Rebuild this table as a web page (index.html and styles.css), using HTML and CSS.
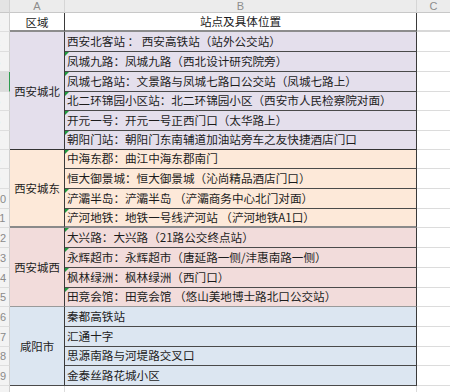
FILE: index.html
```html
<!DOCTYPE html>
<html lang="zh">
<head>
<meta charset="utf-8">
<link rel="stylesheet" href="styles.css">
</head>
<body>
<div class="sheet">
  <div class="corner"></div><div class="colh ch-a">A</div><div class="colh ch-b">B</div><div class="colh ch-c">C</div>

  <div class="rh"><span>1</span></div><div class="ca hdr">区域</div><div class="cb hdr center">站点及具体位置</div><div class="cc hdr-c"></div>

  <div class="rh sel"><span>2</span></div><div class="ca north span6 gb-dark">西安城北</div><div class="cb north">西安北客站 ： 西安高铁站（站外公交站）</div><div class="cc"></div>
  <div class="rh sel"><span>3</span></div><div class="cb north tri">凤城九路：凤城九路（西北设计研究院旁）</div><div class="cc"></div>
  <div class="rh sel act"><span>4</span></div><div class="cb north tri">凤城七路站：文景路与凤城七路口公交站（凤城七路上）</div><div class="cc"></div>
  <div class="rh sel"><span>5</span></div><div class="cb north tri">北二环锦园小区站：北二环锦园小区（西安市人民检察院对面）</div><div class="cc"></div>
  <div class="rh sel"><span>6</span></div><div class="cb north tri">开元一号：开元一号正西门口（太华路上）</div><div class="cc"></div>
  <div class="rh sel"><span>7</span></div><div class="cb north tri gb-dark">朝阳门站：朝阳门东南辅道加油站旁车之友快捷酒店门口</div><div class="cc"></div>

  <div class="rh sel"><span>8</span></div><div class="ca east span4 gb-gray">西安城东</div><div class="cb east tri">中海东郡：曲江中海东郡南门</div><div class="cc"></div>
  <div class="rh sel"><span>9</span></div><div class="cb east">恒大御景城：恒大御景城（沁尚精品酒店门口）</div><div class="cc"></div>
  <div class="rh"><span>10</span></div><div class="cb east tri">浐灞半岛：浐灞半岛 （浐灞商务中心北门对面）</div><div class="cc"></div>
  <div class="rh"><span>11</span></div><div class="cb east tri gb-gray">浐河地铁：地铁一号线浐河站 （浐河地铁A1口）</div><div class="cc"></div>

  <div class="rh"><span>12</span></div><div class="ca west span4 gb-light">西安城西</div><div class="cb west tri">大兴路：大兴路（21路公交终点站）</div><div class="cc"></div>
  <div class="rh"><span>13</span></div><div class="cb west tri">永辉超市：永辉超市（唐延路一侧/沣惠南路一侧）</div><div class="cc"></div>
  <div class="rh"><span>14</span></div><div class="cb west tri">枫林绿洲：枫林绿洲（西门口）</div><div class="cc"></div>
  <div class="rh"><span>15</span></div><div class="cb west tri gb-light">田竞会馆：田竞会馆 （悠山美地博士路北口公交站）</div><div class="cc"></div>

  <div class="rh"><span>16</span></div><div class="ca xy span4">咸阳市</div><div class="cb xy">秦都高铁站</div><div class="cc"></div>
  <div class="rh"><span>17</span></div><div class="cb xy">汇通十字</div><div class="cc"></div>
  <div class="rh"><span>18</span></div><div class="cb xy">思源南路与河堤路交叉口</div><div class="cc"></div>
  <div class="rh"><span>19</span></div><div class="cb xy">金泰丝路花城小区</div><div class="cc"></div>

  <div class="rh"><span>20</span></div><div class="ca blank"></div><div class="cb blank"></div><div class="cc"></div>
</div>
</body>
</html>
```

FILE: styles.css
```css
html, body {
  margin: 0;
  padding: 0;
  background: #ffffff;
  overflow: hidden;
}

.sheet {
  display: grid;
  width: 450px;
  grid-template-columns: 10px 55px 352px 33px;
  grid-template-rows: 13px 19px 20px 20px 20px 19px 20px 19px 19px 20px 20px 19px 20px 20px 20px 19px 20px 20px 19px 20px 20px;
  font-family: "Noto Sans CJK SC", "Noto Sans", sans-serif;
  color: #1c1c1c;
}

.sheet > div {
  box-sizing: border-box;
  min-width: 0;
}

/* column headers */
.corner {
  grid-column: 1;
  background: #e4e4e4;
  border-right: 1px solid #d2d2d2;
  border-bottom: 1px solid #c8c8c8;
}

.colh {
  display: flex;
  align-items: center;
  justify-content: center;
  background: #ececec;
  border-right: 1px solid #d6d6d6;
  border-bottom: 1px solid #c8c8c8;
  font-family: "Liberation Sans", "Noto Sans", sans-serif;
  font-size: 11px;
  color: #8c8c8c;
}

.ch-a { grid-column: 2; }
.ch-b { grid-column: 3; }
.ch-c { grid-column: 4; border-right: none; }

/* row headers */
.rh {
  grid-column: 1;
  display: flex;
  justify-content: flex-end;
  align-items: center;
  overflow: hidden;
  background: #f3f3f3;
  border-right: 1px solid #d0d0d0;
  border-bottom: 1px solid #dedede;
  font-family: "Liberation Sans", "Noto Sans", sans-serif;
  font-size: 11px;
  color: #8a8a8a;
}

.rh span {
  flex: none;
  width: 16px;
  text-align: left;
  margin-right: -1px;
}

.rh.sel { color: #7fb3d6; }

.rh.act {
  background: #dcdcdc;
  border-right: 1px solid #2e9b4e;
}

/* column A */
.ca {
  grid-column: 2;
  display: flex;
  align-items: center;
  justify-content: center;
  font-size: 11.4px;
  border-right: 1px solid #3a3a3a;
  border-bottom: 1px solid #4a4a4a;
  white-space: nowrap;
}

.span6 { grid-row: span 6; }
.span4 { grid-row: span 4; }

/* column B */
.cb {
  grid-column: 3;
  position: relative;
  display: flex;
  align-items: center;
  padding-left: 2px;
  font-size: 11.6px;
  line-height: 1;
  white-space: nowrap;
  overflow: hidden;
  border-right: 1px solid #3a3a3a;
  border-bottom: 1px solid #4a4a4a;
}

.center { justify-content: center; padding-left: 0; }

.hdr {
  background: #ffffff;
  border-bottom: 2px solid #8c8c8c;
}

.cb.tri::before {
  content: "";
  position: absolute;
  top: 0;
  left: 0;
  border-top: 4px solid #1f9a3e;
  border-right: 4px solid transparent;
}

/* column C */
.cc {
  grid-column: 4;
  background: #ffffff;
  border-bottom: 1px solid #dcdcdc;
}

.hdr-c { border-bottom: 2px solid #d8d8d8; }

/* group colours */
.north { background: #e4dfec; }
.east  { background: #fde9d9; }
.west  { background: #f2dcdb; }
.xy    { background: #dce6f1; }

.blank {
  background: #ffffff;
  border-bottom: 1px solid #dcdcdc;
  border-right: 1px solid #dcdcdc;
}

/* group boundaries */
.gb-dark  { border-bottom: 1px solid #333333; }
.gb-gray  { border-bottom: 2px solid #8a8a8a; }
.gb-light { border-bottom: 1px solid #9a9a9a; }
```
